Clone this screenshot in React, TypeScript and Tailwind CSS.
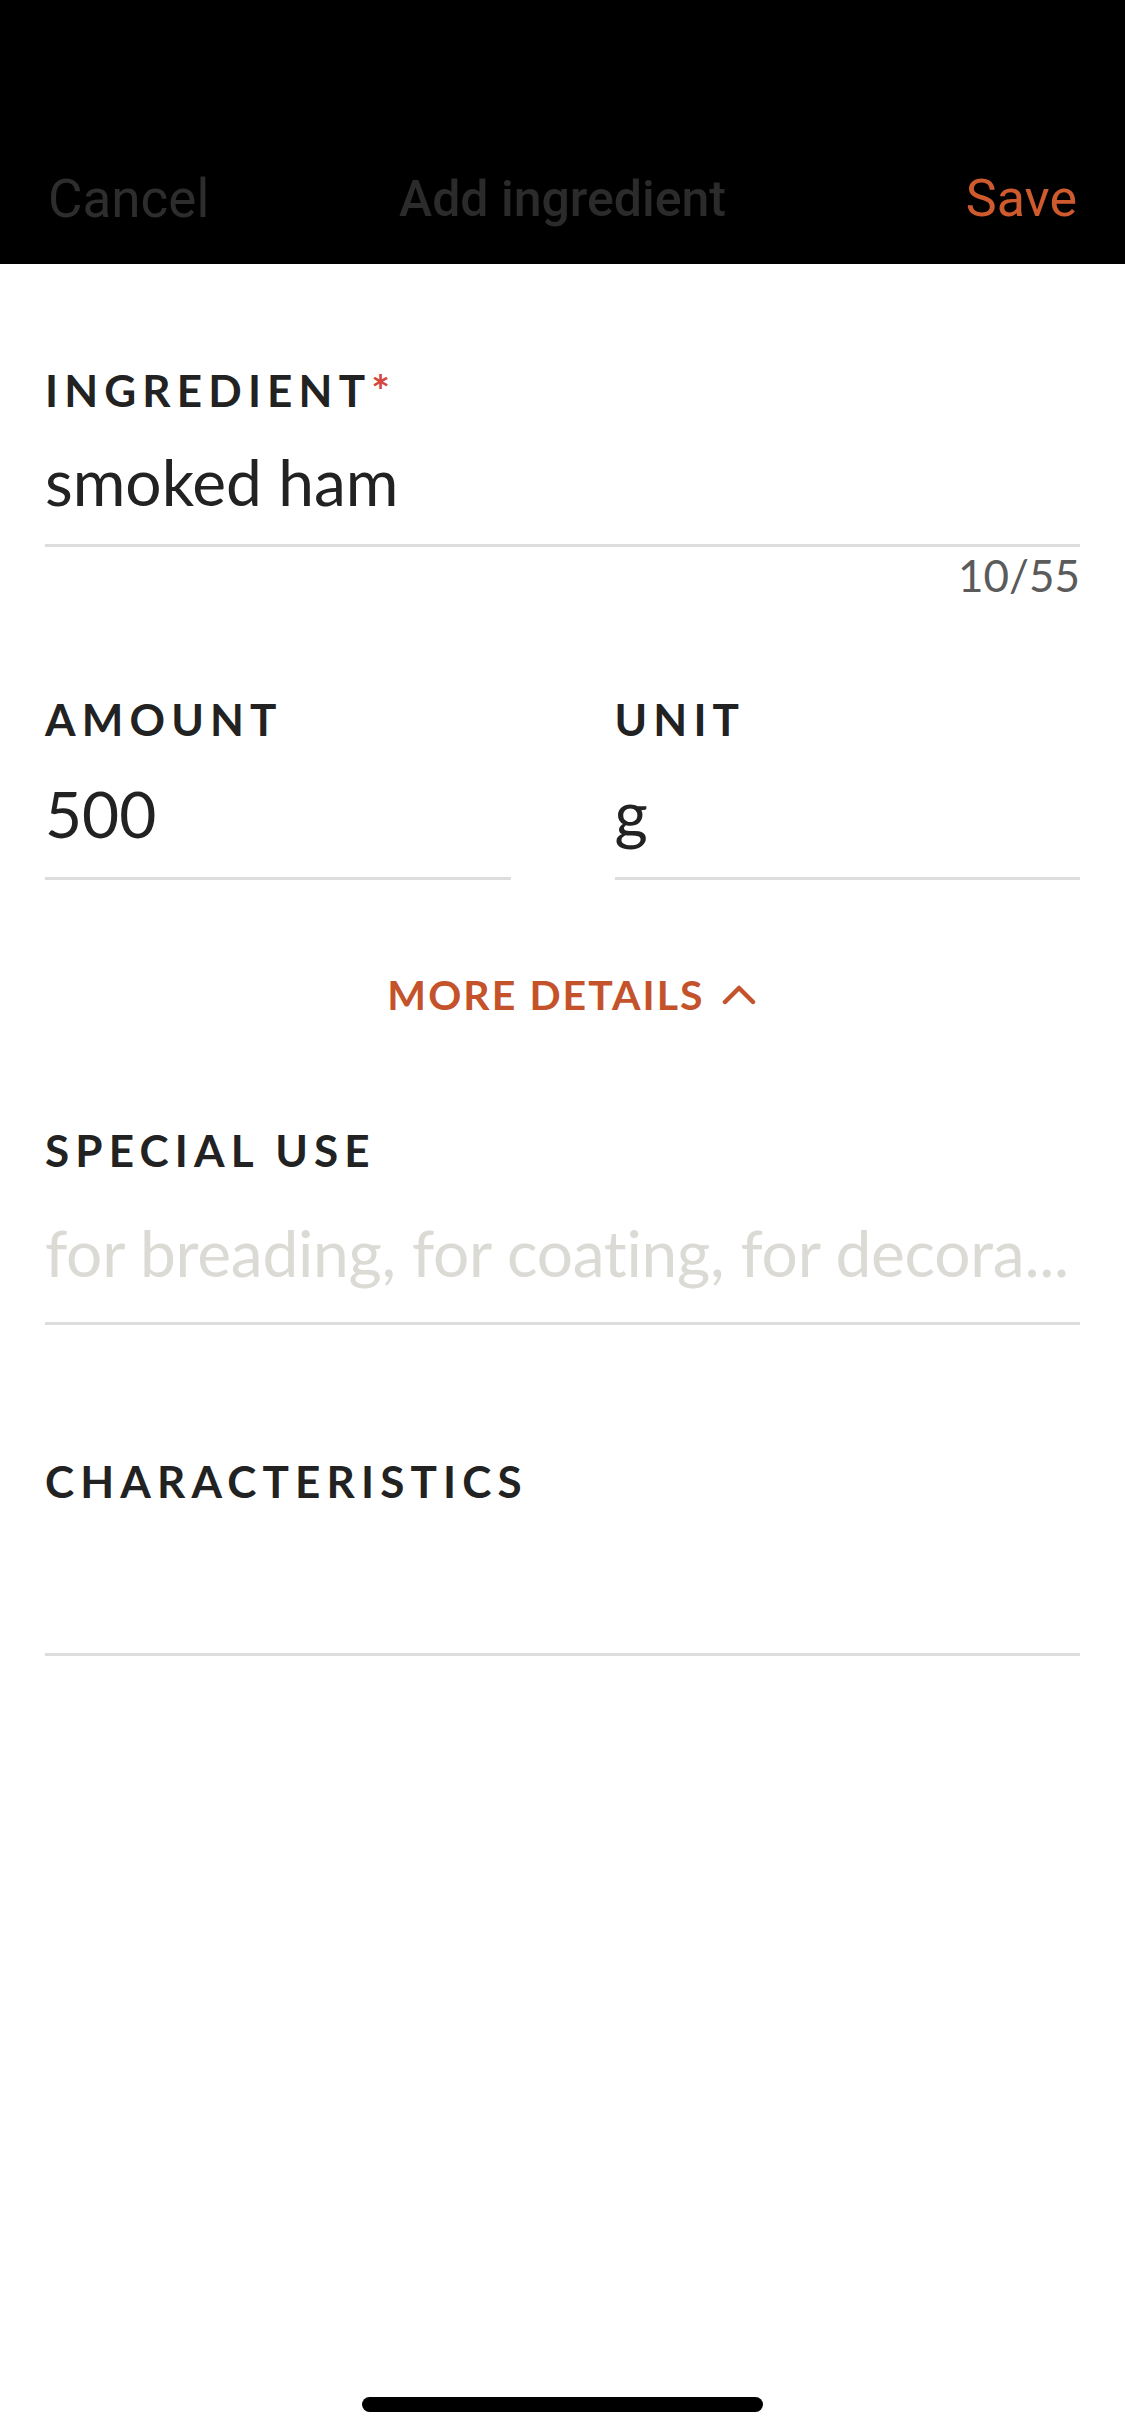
import React from 'react';

const body = { fontFamily: 'Lato, "Open Sans", sans-serif' };
const nav = { fontFamily: 'Roboto, "Liberation Sans", sans-serif' };

function Label({ text, required }: { text: string; required?: boolean }) {
  return (
    <div className="text-[44px] leading-[44px] font-bold tracking-[0.14em] text-[#222222]">
      {text}
      {required && <span className="text-[#d4473f] tracking-normal">*</span>}
    </div>
  );
}

function Field({
  value,
  placeholder,
  gap,
  padBottom,
}: {
  value?: string;
  placeholder?: string;
  gap: string;
  padBottom: string;
}) {
  return (
    <div className={`${gap} border-b-[3px] border-[#dddddb] ${padBottom}`}>
      {value ? (
        <div className="h-[80px] text-[64px] leading-[80px] text-[#222222] whitespace-nowrap">{value}</div>
      ) : (
        <div className="h-[80px] text-[64px] leading-[80px] text-[#dcdad5] whitespace-nowrap tracking-[-0.004em]">
          {placeholder}
        </div>
      )}
    </div>
  );
}

export default function App() {
  return (
    <div className="w-[1125px] min-h-[2436px] bg-white flex flex-col" style={body}>
      {/* nav bar */}
      <div className="h-[264px] bg-black pt-[169px] px-[48px]" style={nav}>
        <div className="h-[60px] grid grid-cols-[1fr_auto_1fr] items-center text-[53px] leading-[60px]">
          <span className="text-[#2d2d2d]">Cancel</span>
          <span className="text-[#2b2b2b] text-[50px] font-medium">Add ingredient</span>
          <span className="text-[#cf5a2e] text-right text-[52px]">Save</span>
        </div>
      </div>

      <div className="px-[45px]">
        {/* ingredient */}
        <div className="mt-[104px]">
          <Label text="INGREDIENT" required />
          <Field value="smoked ham" gap="mt-[30px]" padBottom="pb-[22px]" />
          <div className="mt-[6px] text-right text-[44px] leading-[44px] text-[#5b5b5b]">10/55</div>
        </div>

        {/* amount / unit */}
        <div className="mt-[100px] grid grid-cols-2 gap-[104px]">
          <div>
            <Label text="AMOUNT" />
            <Field value="500" gap="mt-[33px]" padBottom="pb-[23px]" />
          </div>
          <div>
            <Label text="UNIT" />
            <Field value="g" gap="mt-[33px]" padBottom="pb-[23px]" />
          </div>
        </div>

        {/* more details toggle */}
        <div className="mt-[84px] h-[60px] pl-[18px] flex items-center justify-center gap-[17px] text-[#c4522a]">
          <span className="text-[41px] leading-[41px] font-bold tracking-[0.05em]">MORE DETAILS</span>
          <svg width="34" height="22" viewBox="0 0 34 22" fill="none">
            <path d="M3 19 L17 5 L31 19" stroke="#c4522a" strokeWidth="4.5" strokeLinecap="round" strokeLinejoin="round" />
          </svg>
        </div>

        {/* special use */}
        <div className="mt-[104px]">
          <Label text="SPECIAL USE" />
          <Field placeholder="for breading, for coating, for decora..." gap="mt-[41px]" padBottom="pb-[29px]" />
        </div>

        {/* characteristics */}
        <div className="mt-[134px]">
          <Label text="CHARACTERISTICS" />
          <Field placeholder="" gap="mt-[41px]" padBottom="pb-[29px]" />
        </div>
      </div>

      {/* home indicator */}
      <div className="mt-auto mb-[24px] flex justify-center">
        <div className="w-[401px] h-[15px] rounded-full bg-black" />
      </div>
    </div>
  );
}
